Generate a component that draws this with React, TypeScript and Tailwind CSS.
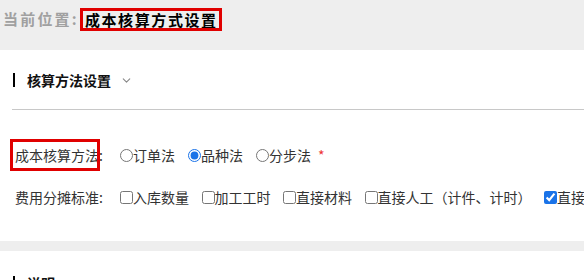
import React, { useState } from 'react';
import { ChevronDown } from 'lucide-react';

const fontStack = "font-['Microsoft_YaHei','Noto_Sans_CJK_SC',sans-serif]";

const SectionTitle = ({ title }: { title: string }) => (
  <div className="flex items-center h-[20px] pl-[1px]">
    <span className="w-[2px] h-[14px] bg-black" />
    <span className="ml-[12px] text-[14px] font-bold text-[#111] leading-none">{title}</span>
    <ChevronDown className="ml-[9px] text-[#888]" size={13} strokeWidth={2} />
  </div>
);

const methods = ['订单法', '品种法', '分步法'];
const standards = [
  { name: '入库数量', checked: false },
  { name: '加工工时', checked: false },
  { name: '直接材料', checked: false },
  { name: '直接人工（计件、计时）', checked: false },
  { name: '直接材料', checked: true },
];

const App = () => {
  const [method, setMethod] = useState('品种法');
  const [checks, setChecks] = useState(standards.map((s) => s.checked));

  return (
    <div className={`w-[584px] h-[280px] overflow-hidden bg-[#eeeeee] ${fontStack}`}>
      {/* Breadcrumb */}
      <div className="h-[50px] flex items-start pt-[8px] pl-[3px] whitespace-nowrap">
        <span className="text-[15px] font-bold text-[#a0a0a0] tracking-[2.2px] leading-[22px]">当前位置:</span>
        <span className="ml-[1px] border-[3px] border-[#e00000] h-[23px] flex items-center pl-[2px] pr-[1px]">
          <span className="text-[15px] font-bold text-black tracking-[1.6px] leading-none">成本核算方式设置</span>
        </span>
      </div>

      {/* Method settings */}
      <div className="bg-white pl-[12px] pt-[20px] pb-[30px]">
        <SectionTitle title="核算方法设置" />
        <div className="mt-[19px] h-px bg-[#c8c8c8]" />

        <div className="mt-[31px] h-[28px] flex items-center text-[14px] text-[#333] whitespace-nowrap">
          <span className="w-[108px] shrink-0 pl-[3px]">
            <span className="relative">
              成本核算方法
              <span className="absolute -left-[5px] -right-[1px] -top-[6px] -bottom-[6px] border-[3px] border-[#e00000]" />
            </span>
            :
          </span>
          <div className="flex items-center gap-x-[13px] shrink-0">
            {methods.map((m) => (
              <label key={m} className="flex items-center cursor-pointer">
                <input
                  type="radio"
                  name="method"
                  checked={method === m}
                  onChange={() => setMethod(m)}
                  className="w-[13px] h-[13px] accent-[#1a73e8]"
                />
                <span>{m}</span>
              </label>
            ))}
            <span className="text-[#e33] -ml-[6px] text-[14px]">*</span>
          </div>
        </div>

        <div className="mt-[14px] h-[28px] flex items-center text-[14px] text-[#333] whitespace-nowrap">
          <span className="w-[108px] shrink-0 pl-[3px]">费用分摊标准:</span>
          <div className="flex items-center gap-x-[12.5px] shrink-0">
            {standards.map((s, i) => (
              <label key={i} className="flex items-center cursor-pointer shrink-0">
                <input
                  type="checkbox"
                  checked={checks[i]}
                  onChange={() => setChecks(checks.map((c, j) => (j === i ? !c : c)))}
                  className="w-[13px] h-[13px] accent-[#1a73e8]"
                />
                <span>{s.name}</span>
              </label>
            ))}
          </div>
        </div>
      </div>

      <div className="h-[10px]" />

      {/* Notes */}
      <div className="bg-white pl-[12px] pt-[22px] h-[60px]">
        <SectionTitle title="说明" />
      </div>
    </div>
  );
};

export default App;
